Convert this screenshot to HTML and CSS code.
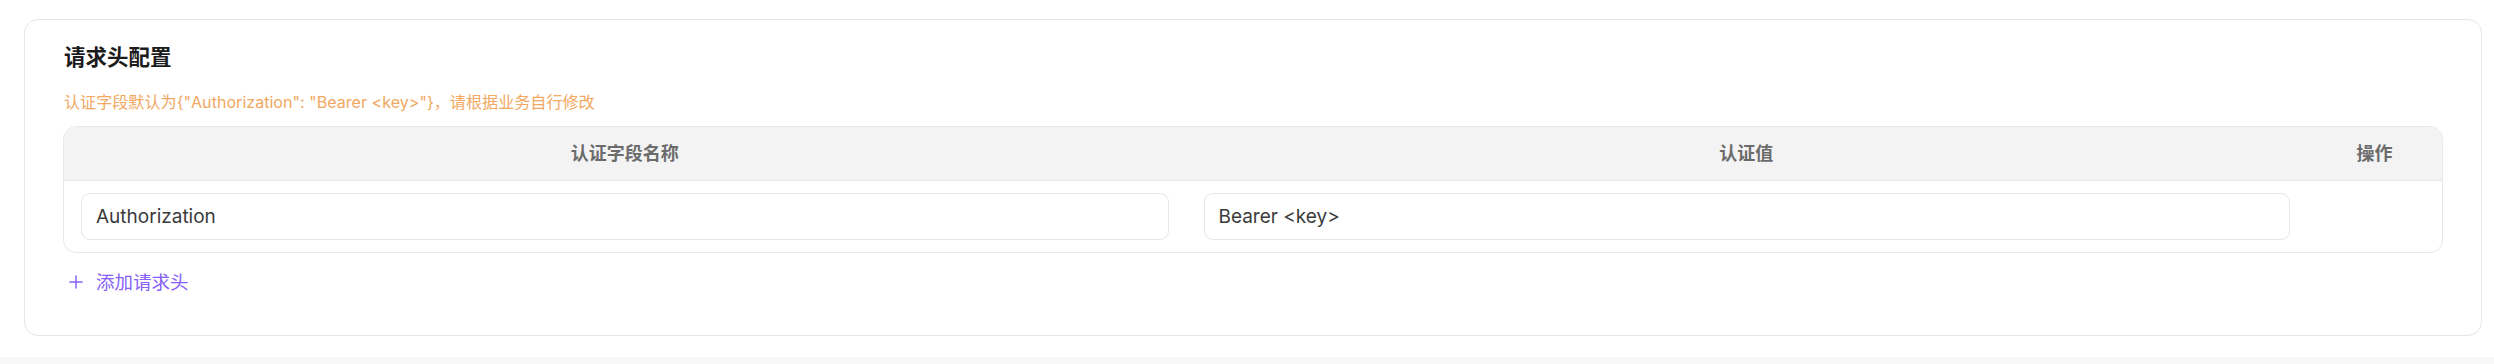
FILE: index.html
```html
<!DOCTYPE html>
<html lang="zh-CN">
<head>
<meta charset="utf-8">
<title>请求头配置</title>
<link rel="stylesheet" href="styles.css">
</head>
<body>
<div class="page">
  <section class="card">
    <h2 class="card-title">请求头配置</h2>
    <p class="hint">认证字段默认为{"Authorization": "Bearer &lt;key&gt;"}，请根据业务自行修改</p>
    <div class="table">
      <div class="thead">
        <div class="th">认证字段名称</div>
        <div class="th">认证值</div>
        <div class="th">操作</div>
      </div>
      <div class="trow">
        <div class="td"><input class="input" type="text" value="Authorization"></div>
        <div class="td"><input class="input" type="text" value="Bearer <key>"></div>
        <div class="td"></div>
      </div>
    </div>
    <button class="add-btn" type="button">
      <svg class="plus" width="14" height="14" viewBox="0 0 14 14" aria-hidden="true"><path d="M7 0.5V13.5M0.5 7H13.5" stroke="currentColor" stroke-width="1.5" fill="none"/></svg>
      <span>添加请求头</span>
    </button>
  </section>
</div>
<div class="page-foot"></div>
</body>
</html>
```

FILE: styles.css
```css
* { box-sizing: border-box; }
html, body { margin: 0; padding: 0; background: #ffffff; }
body {
  font-family: "Inter", "Noto Sans CJK SC", sans-serif;
  color: #222;
}
.page {
  padding: 19px 12px 0 24px;
}
.card {
  border: 1px solid #e6e6e6;
  border-radius: 14px;
  padding: 22px 38px 41px 38px;
  background: #fff;
}
.card-title {
  margin: 0 0 18px 1px;
  font-size: 21.5px;
  line-height: 30px;
  font-weight: 700;
  color: #1c1c1c;
}
.hint {
  margin: 0 0 12px 1px;
  font-size: 16.1px;
  line-height: 24px;
  color: #f2a862;
}
.table {
  border: 1px solid #e8e8e8;
  border-radius: 13px;
  overflow: hidden;
}
.thead, .trow {
  display: grid;
  grid-template-columns: 1fr 1fr 135px;
}
.thead {
  background: #f3f3f3;
  border-bottom: 1px solid #e6e6e6;
  height: 54px;
  align-items: center;
}
.th {
  text-align: center;
  font-size: 18px;
  font-weight: 700;
  color: #6b6b6b;
  line-height: 24px;
}
.trow {
  padding: 12px 0;
}
.td {
  padding: 0 17px;
}
.td:nth-child(2) { padding-left: 18px; }
.input {
  display: block;
  width: 100%;
  height: 47px;
  border: 1px solid #e6e6e6;
  border-radius: 9px;
  padding: 0 14px;
  font-family: "Inter", "Noto Sans CJK SC", sans-serif;
  font-size: 19px;
  color: #3a3a3a;
  background: #fff;
  outline: none;
}
.add-btn {
  display: flex;
  align-items: center;
  gap: 13px;
  margin: 17px 0 0 6px;
  padding: 0;
  border: 0;
  background: transparent;
  color: #8660f8;
  font-family: "Inter", "Noto Sans CJK SC", sans-serif;
  font-size: 18.5px;
  line-height: 24px;
  cursor: pointer;
}
.plus { display: block; }
.page-foot {
  margin-top: 21px;
  height: 7px;
  background: #f8f8f8;
}
```
